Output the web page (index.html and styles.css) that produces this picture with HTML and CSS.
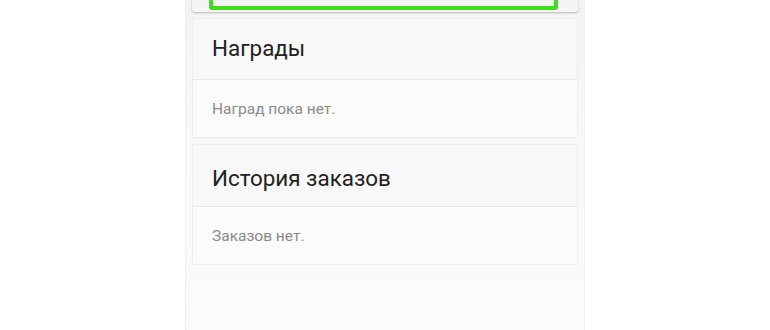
FILE: index.html
```html
<!DOCTYPE html>
<html lang="ru">
<head>
<meta charset="utf-8">
<link rel="stylesheet" href="styles.css">
</head>
<body>
<div class="column">
  <div class="top-card">
    <div class="green-box"></div>
  </div>
  <div class="card card-first">
    <div class="card-head">Награды</div>
    <div class="card-body">Наград пока нет.</div>
  </div>
  <div class="card card-second">
    <div class="card-head">История заказов</div>
    <div class="card-body">Заказов нет.</div>
  </div>
</div>
</body>
</html>
```

FILE: styles.css
```css
html, body {
  margin: 0;
  padding: 0;
  background: #ffffff;
  height: 100%;
}
body {
  font-family: Roboto, "Noto Sans", sans-serif;
}
.column {
  width: 400px;
  margin-left: 185px;
  height: 330px;
  box-sizing: border-box;
  padding: 0 8px;
  background: linear-gradient(#f3f3f3, #f8f8f8 40%, #fbfbfb);
  box-shadow: inset 1px 0 0 #f0f0f0, inset -1px 0 0 #f0f0f0;
  display: flex;
  flex-direction: column;
}
.top-card {
  height: 12px;
  margin: 0 -1px;
  background: #f5f5f5;
  border-radius: 0 0 3px 3px;
  box-shadow: 0 1px 2px rgba(0,0,0,0.25);
  padding: 0 20px 0 17px;
  box-sizing: border-box;
}
.green-box {
  height: 10px;
  border: 4px solid #3fdc1f;
  border-top: none;
  border-radius: 0 0 4px 4px;
  background: #f3f3f3;
  box-sizing: border-box;
}
.card {
  background: #f9f9f9;
  border-radius: 2px;
  box-shadow: 0 0 0 1px #efefef, 0 1px 2px rgba(0,0,0,0.05);
}
.card-first {
  margin-top: 7px;
}
.card-second {
  margin-top: 8px;
}
.card-head {
  height: 61px;
  box-sizing: border-box;
  padding: 0 19px 2px;
  display: flex;
  align-items: center;
  font-size: 22.4px;
  color: #222222;
  border-bottom: 1px solid #e8e8e8;
  background: #f8f8f8;
}
.card-second .card-head {
  height: 62px;
  padding-top: 4px;
  padding-bottom: 0;
}
.card-body {
  height: 57px;
  box-sizing: border-box;
  padding: 0 19px;
  display: flex;
  align-items: center;
  font-size: 15.5px;
  color: #8a8a8a;
  background: #fbfbfb;
}
```
